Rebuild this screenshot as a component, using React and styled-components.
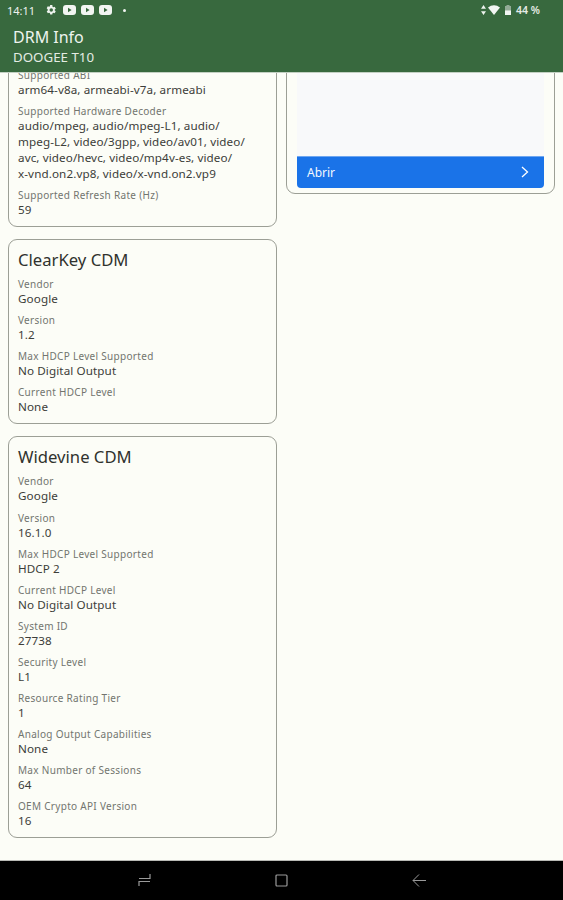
import React from 'react';
import styled, { createGlobalStyle } from 'styled-components';

const GlobalStyle = createGlobalStyle`
  html, body {
    margin: 0;
    padding: 0;
    height: 100%;
    background: #fcfdf7;
    font-family: "Noto Sans", sans-serif;
  }
`;

const Screen = styled.div`
  display: flex;
  flex-direction: column;
  width: 563px;
  height: 900px;
  overflow: hidden;
  background: #fcfdf7;
`;

const Header = styled.header`
  flex: none;
  height: 73px;
  background: #38693e;
  box-sizing: border-box;
  border-bottom: 1px solid #c3d0c3;
`;

const StatusBar = styled.div`
  display: flex;
  align-items: center;
  justify-content: space-between;
  height: 20px;
  padding: 0 23px 0 7px;
`;

const StatusGroup = styled.div`
  display: flex;
  align-items: center;
  gap: ${(p) => p.$gap || 5}px;
`;

const Clock = styled.span`
  font-size: 11px;
  color: #eef3ee;
  margin-right: 5px;
`;

const BatteryText = styled.span`
  font-size: 10.5px;
  font-weight: 600;
  color: #e6ece6;
`;

const Notifications = styled.div`
  display: flex;
  align-items: center;
  gap: 5px;
  margin-left: 1px;
`;

const MoreDot = styled.span`
  width: 3px;
  height: 3px;
  margin-left: 6px;
  border-radius: 50%;
  background: #f2f5f2;
`;

const AppTitle = styled.div`
  margin: 7px 0 0 13px;
  font-size: 16px;
  line-height: 20px;
  color: #eef4ee;
`;

const AppSubtitle = styled.div`
  margin: 2px 0 0 13px;
  font-size: 13.3px;
  line-height: 17px;
  color: #e4ece4;
`;

const Content = styled.main`
  flex: 1;
  min-height: 0;
  overflow: hidden;
`;

// the list is scrolled down a bit, so the first cards start above the header
const Columns = styled.div`
  display: grid;
  grid-template-columns: 269px 269px;
  column-gap: 9px;
  align-items: start;
  padding: 0 8px;
  margin-top: -31px;
`;

const Column = styled.div`
  display: flex;
  flex-direction: column;
  gap: 12px;
`;

const Card = styled.section`
  box-sizing: border-box;
  border: 1px solid #9c9f96;
  border-radius: 9px;
  padding: ${(p) => p.$top || 8}px 9px 8px;
`;

const AdCard = styled(Card)`
  padding: 9px 10px 5px 10px;
`;

const CardTitle = styled.h2`
  margin: 0 0 5px;
  font-size: 16.67px;
  font-weight: 400;
  line-height: 24px;
  color: #30322e;
`;

const Field = styled.div`
  & + & {
    margin-top: 6.1px;
  }
`;

const Label = styled.div`
  font-size: 10px;
  line-height: 15px;
  letter-spacing: 0.3px;
  color: #72756f;
`;

const Value = styled.div`
  margin-top: -1px;
  font-size: 11.67px;
  line-height: 16px;
  letter-spacing: 0.1px;
  white-space: pre-line;
  color: #3c3e3a;
`;

const AdPanel = styled.div`
  display: flex;
  flex-direction: column;
  height: 136px;
  background: #f8f9fa;
  border-radius: 0 0 4px 4px;
`;

const AdSpace = styled.div`
  flex: 1;
`;

const OpenButton = styled.div`
  display: flex;
  align-items: center;
  justify-content: space-between;
  height: 32px;
  padding: 0 15px 1px 10px;
  background: #1a73e8;
  border-top: 1px solid #6ea6f0;
  border-radius: 0 0 4px 4px;
  box-sizing: border-box;
  color: #f4f8fe;
  font-size: 12px;
`;

const NavBar = styled.nav`
  flex: none;
  display: grid;
  grid-template-columns: repeat(3, 137.5px);
  justify-items: center;
  align-items: center;
  justify-content: center;
  height: 40px;
  box-sizing: border-box;
  padding-bottom: 1px;
  background: #000;
  border-top: 1px solid #b9bab5;
`;

const Gear = () => (
  <svg width="12" height="12" viewBox="0 0 24 24" fill="#eef3ee">
    <path fillRule="evenodd" d="M19.4 13a7.6 7.6 0 0 0 0-2l2.2-1.700-2.200-3.700-2.600 1a7.6 7.6 0 0 0-1.700-1L14.600 2h-4.300l-.4 2.700a7.6 7.6 0 0 0-1.700 1l-2.600-1-2.200 3.700L5.600 11a7.6 7.6 0 0 0 0 2l-2.200 1.700 2.200 3.700 2.600-1a7.600 7.600 0 0 0 1.700 1l.4 2.600h4.300l.4-2.600a7.600 7.600 0 0 0 1.700-1l2.600 1 2.200-3.700zM12.500 15.500a3.500 3.500 0 1 1 0-7 3.500 3.500 0 0 1 0 7z" />
  </svg>
);

const Video = () => (
  <svg width="13" height="10" viewBox="0 0 13 10">
    <rect width="13" height="10" rx="3" fill="#f2f5f2" />
    <path d="M5 2.800 8.600 5 5 7.200z" fill="#38693e" />
  </svg>
);

const DataArrows = () => (
  <svg width="5" height="10" viewBox="0 0 5 10" fill="#eef3ee">
    <path d="M2.500 0 5 3.800H0zM2.500 10 0 6.200h5z" />
  </svg>
);

const Wifi = () => (
  <svg width="12" height="10" viewBox="0 0 12 10" fill="#f2f5f2">
    <path d="M0 2.600C3.300-.7 8.700-.7 12 2.600L6 10z" />
  </svg>
);

const Battery = () => (
  <svg width="6" height="10" viewBox="0 0 6 10">
    <path d="M1.500 0h3v1H6v9H0V1h1.500z" fill="#93ab96" />
    <path d="M0 5.500h6V10H0z" fill="#f2f5f2" />
  </svg>
);

const Chevron = () => (
  <svg width="8" height="12" viewBox="0 0 8 12" fill="none" stroke="#fff" strokeWidth="1.300">
    <path d="M1 1l5.500 5L1 11" />
  </svg>
);

const RecentsIcon = () => (
  <svg width="13" height="12" viewBox="0 0 13 12" fill="none" stroke="#9a9a9a" strokeWidth="1.200">
    <path d="M12 0v4.500H1M1 12V7.500h11" />
  </svg>
);

const HomeIcon = () => (
  <svg width="13" height="13" viewBox="0 0 13 13" fill="none" stroke="#9a9a9a" strokeWidth="1.200">
    <rect x="1" y="1" width="11" height="11" rx="1" />
  </svg>
);

const BackIcon = () => (
  <svg width="14" height="13" viewBox="0 0 14 13" fill="none" stroke="#9a9a9a" strokeWidth="1">
    <path d="M7 .5 1 6.500l6 6M1 6.500h13" />
  </svg>
);

const device = [
  ['Supported ABI', 'arm64-v8a, armeabi-v7a, armeabi'],
  [
    'Supported Hardware Decoder',
    'audio/mpeg, audio/mpeg-L1, audio/\nmpeg-L2, video/3gpp, video/av01, video/\navc, video/hevc, video/mp4v-es, video/\nx-vnd.on2.vp8, video/x-vnd.on2.vp9',
  ],
  ['Supported Refresh Rate (Hz)', '59'],
];

const clearKey = [
  ['Vendor', 'Google'],
  ['Version', '1.2'],
  ['Max HDCP Level Supported', 'No Digital Output'],
  ['Current HDCP Level', 'None'],
];

const widevine = [
  ['Vendor', 'Google'],
  ['Version', '16.1.0'],
  ['Max HDCP Level Supported', 'HDCP 2'],
  ['Current HDCP Level', 'No Digital Output'],
  ['System ID', '27738'],
  ['Security Level', 'L1'],
  ['Resource Rating Tier', '1'],
  ['Analog Output Capabilities', 'None'],
  ['Max Number of Sessions', '64'],
  ['OEM Crypto API Version', '16'],
];

const Fields = ({ rows }) =>
  rows.map(([label, value]) => (
    <Field key={label}>
      <Label>{label}</Label>
      <Value>{value}</Value>
    </Field>
  ));

const App = () => (
  <Screen>
    <GlobalStyle />
    <Header>
      <StatusBar>
        <StatusGroup>
          <Clock>14:11</Clock>
          <Gear />
          <Notifications>
            <Video />
            <Video />
            <Video />
          </Notifications>
          <MoreDot />
        </StatusGroup>
        <StatusGroup>
          <StatusGroup $gap={2}>
            <DataArrows />
            <Wifi />
          </StatusGroup>
          <Battery />
          <BatteryText>44 %</BatteryText>
        </StatusGroup>
      </StatusBar>
      <AppTitle>DRM Info</AppTitle>
      <AppSubtitle>DOOGEE T10</AppSubtitle>
    </Header>
    <Content>
      <Columns>
        <Column>
          <Card $top={25}>
            <Fields rows={device} />
          </Card>
          <Card>
            <CardTitle>ClearKey CDM</CardTitle>
            <Fields rows={clearKey} />
          </Card>
          <Card>
            <CardTitle>Widevine CDM</CardTitle>
            <Fields rows={widevine} />
          </Card>
        </Column>
        <Column>
          <AdCard>
            <AdPanel>
              <AdSpace />
              <OpenButton>
                Abrir
                <Chevron />
              </OpenButton>
            </AdPanel>
          </AdCard>
        </Column>
      </Columns>
    </Content>
    <NavBar>
      <RecentsIcon />
      <HomeIcon />
      <BackIcon />
    </NavBar>
  </Screen>
);

export default App;
